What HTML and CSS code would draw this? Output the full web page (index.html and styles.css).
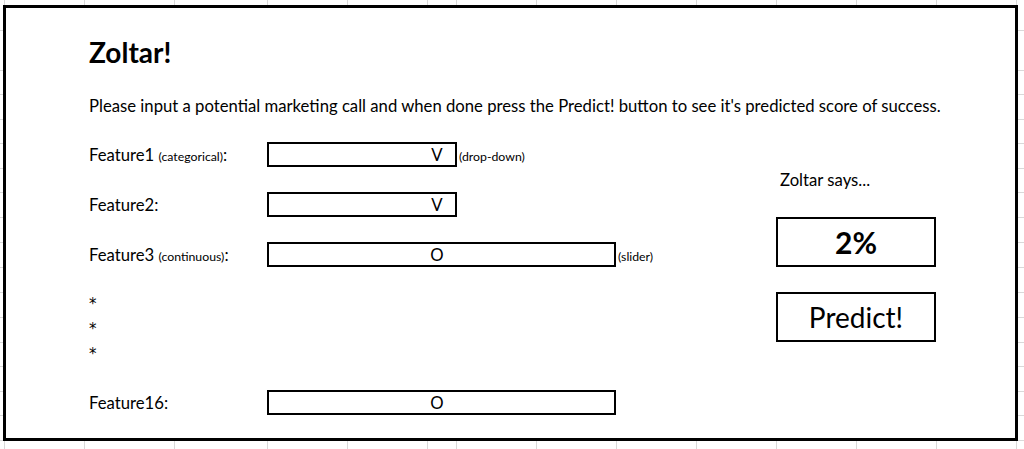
FILE: index.html
```html
<!DOCTYPE html>
<html lang="en">
<head>
<meta charset="utf-8">
<title>Zoltar!</title>
<link rel="stylesheet" href="styles.css">
</head>
<body>
<div class="sheet">
  <h1 class="title">Zoltar!</h1>
  <p class="intro">Please input a potential marketing call and when done press the Predict! button to see it's predicted score of success.</p>
  <div class="main">
    <div class="form">
      <div class="field">
        <span class="label">Feature1 <small class="note">(categorical)</small>:</span>
        <div class="box box-short"><span class="mark">V</span></div>
        <small class="hint">(drop-down)</small>
      </div>
      <div class="field">
        <span class="label">Feature2:</span>
        <div class="box box-short"><span class="mark">V</span></div>
      </div>
      <div class="field">
        <span class="label">Feature3 <small class="note">(continuous)</small>:</span>
        <div class="box box-long"><span class="mark">O</span></div>
        <small class="hint">(slider)</small>
      </div>
      <div class="dots">
        <span class="dot">*</span>
        <span class="dot">*</span>
        <span class="dot">*</span>
      </div>
      <div class="field field-last">
        <span class="label">Feature16:</span>
        <div class="box box-long"><span class="mark">O</span></div>
      </div>
    </div>
    <div class="oracle">
      <p class="says">Zoltar says...</p>
      <div class="result">2%</div>
      <div class="predict">Predict!</div>
    </div>
  </div>
</div>
</body>
</html>
```

FILE: styles.css
```css
html, body {
  margin: 0;
  padding: 0;
}

body {
  width: 1024px;
  height: 449px;
  overflow: hidden;
  box-sizing: border-box;
  padding: 5px 0 0 3px;
  font-family: Lato, "Open Sans", sans-serif;
  color: #000;
  background-color: #fff;
  background-image:
    linear-gradient(to right,
      transparent 0 4px, #d9d9d9 4px 5px,
      transparent 5px 84px, #d9d9d9 84px 85px,
      transparent 85px 174px, #d9d9d9 174px 175px,
      transparent 175px 267px, #d9d9d9 267px 268px,
      transparent 268px 347px, #d9d9d9 347px 348px,
      transparent 348px 427px, #d9d9d9 427px 428px,
      transparent 428px 456px, #d9d9d9 456px 457px,
      transparent 457px 536px, #d9d9d9 536px 537px,
      transparent 537px 616px, #d9d9d9 616px 617px,
      transparent 617px 696px, #d9d9d9 696px 697px,
      transparent 697px 776px, #d9d9d9 776px 777px,
      transparent 777px 856px, #d9d9d9 856px 857px,
      transparent 857px 936px, #d9d9d9 936px 937px,
      transparent 937px 1016px, #d9d9d9 1016px 1017px,
      transparent 1017px),
    linear-gradient(to bottom,
      transparent 0 30px, #d9d9d9 30px 31px,
      transparent 31px 70px, #d9d9d9 70px 71px,
      transparent 71px 94px, #d9d9d9 94px 95px,
      transparent 95px 119px, #d9d9d9 119px 120px,
      transparent 120px 143px, #d9d9d9 143px 144px,
      transparent 144px 168px, #d9d9d9 168px 169px,
      transparent 169px 192px, #d9d9d9 192px 193px,
      transparent 193px 217px, #d9d9d9 217px 218px,
      transparent 218px 242px, #d9d9d9 242px 243px,
      transparent 243px 267px, #d9d9d9 267px 268px,
      transparent 268px 292px, #d9d9d9 292px 293px,
      transparent 293px 317px, #d9d9d9 317px 318px,
      transparent 318px 342px, #d9d9d9 342px 343px,
      transparent 343px 366px, #d9d9d9 366px 367px,
      transparent 367px 391px, #d9d9d9 391px 392px,
      transparent 392px 415px, #d9d9d9 415px 416px,
      transparent 416px 440px, #d9d9d9 440px 441px,
      transparent 441px);
}

.sheet {
  box-sizing: border-box;
  width: 1015px;
  height: 436px;
  border: 3px solid #000;
  background: #fff;
  padding: 0 0 0 83px;
}

.title {
  margin: 26px 0 0;
  height: 36px;
  font-size: 28px;
  line-height: 36px;
  font-weight: 700;
}

.intro {
  margin: 25px 0 0;
  height: 22px;
  font-size: 16.7px;
  line-height: 22px;
  white-space: nowrap;
}

.main {
  display: flex;
  margin-top: 25px;
}

.form {
  flex: none;
  width: 687px;
  display: flex;
  flex-direction: column;
  gap: 25px;
}

.field {
  display: flex;
  align-items: center;
  height: 25px;
  font-size: 16.7px;
}

.field-last {
  margin-top: -2px;
}

.label {
  flex: none;
  width: 178px;
  white-space: nowrap;
}

.note {
  font-size: 12.3px;
}

.box {
  box-sizing: border-box;
  flex: none;
  height: 25px;
  border: 2px solid #000;
  display: flex;
  align-items: center;
}

.box-short {
  width: 190px;
}

.box-long {
  width: 349px;
}

.mark {
  width: 20px;
  margin-left: 158px;
  text-align: center;
}

.hint {
  font-size: 12.3px;
  margin-left: 2px;
  padding-top: 3px;
}

.dots {
  display: flex;
  flex-direction: column;
  font-family: "DejaVu Sans", sans-serif;
  font-size: 15px;
}

.dot {
  height: 25px;
  line-height: 25px;
}

.oracle {
  flex: none;
  width: 160px;
  display: flex;
  flex-direction: column;
}

.says {
  margin: 26px 0 0 4px;
  height: 25px;
  line-height: 25px;
  font-size: 16.7px;
}

.result,
.predict {
  box-sizing: border-box;
  height: 50px;
  border: 2px solid #000;
  display: flex;
  align-items: center;
  justify-content: center;
}

.result {
  margin-top: 24px;
  font-size: 30px;
  font-weight: 700;
}

.predict {
  margin-top: 25px;
  font-size: 28px;
}
```
